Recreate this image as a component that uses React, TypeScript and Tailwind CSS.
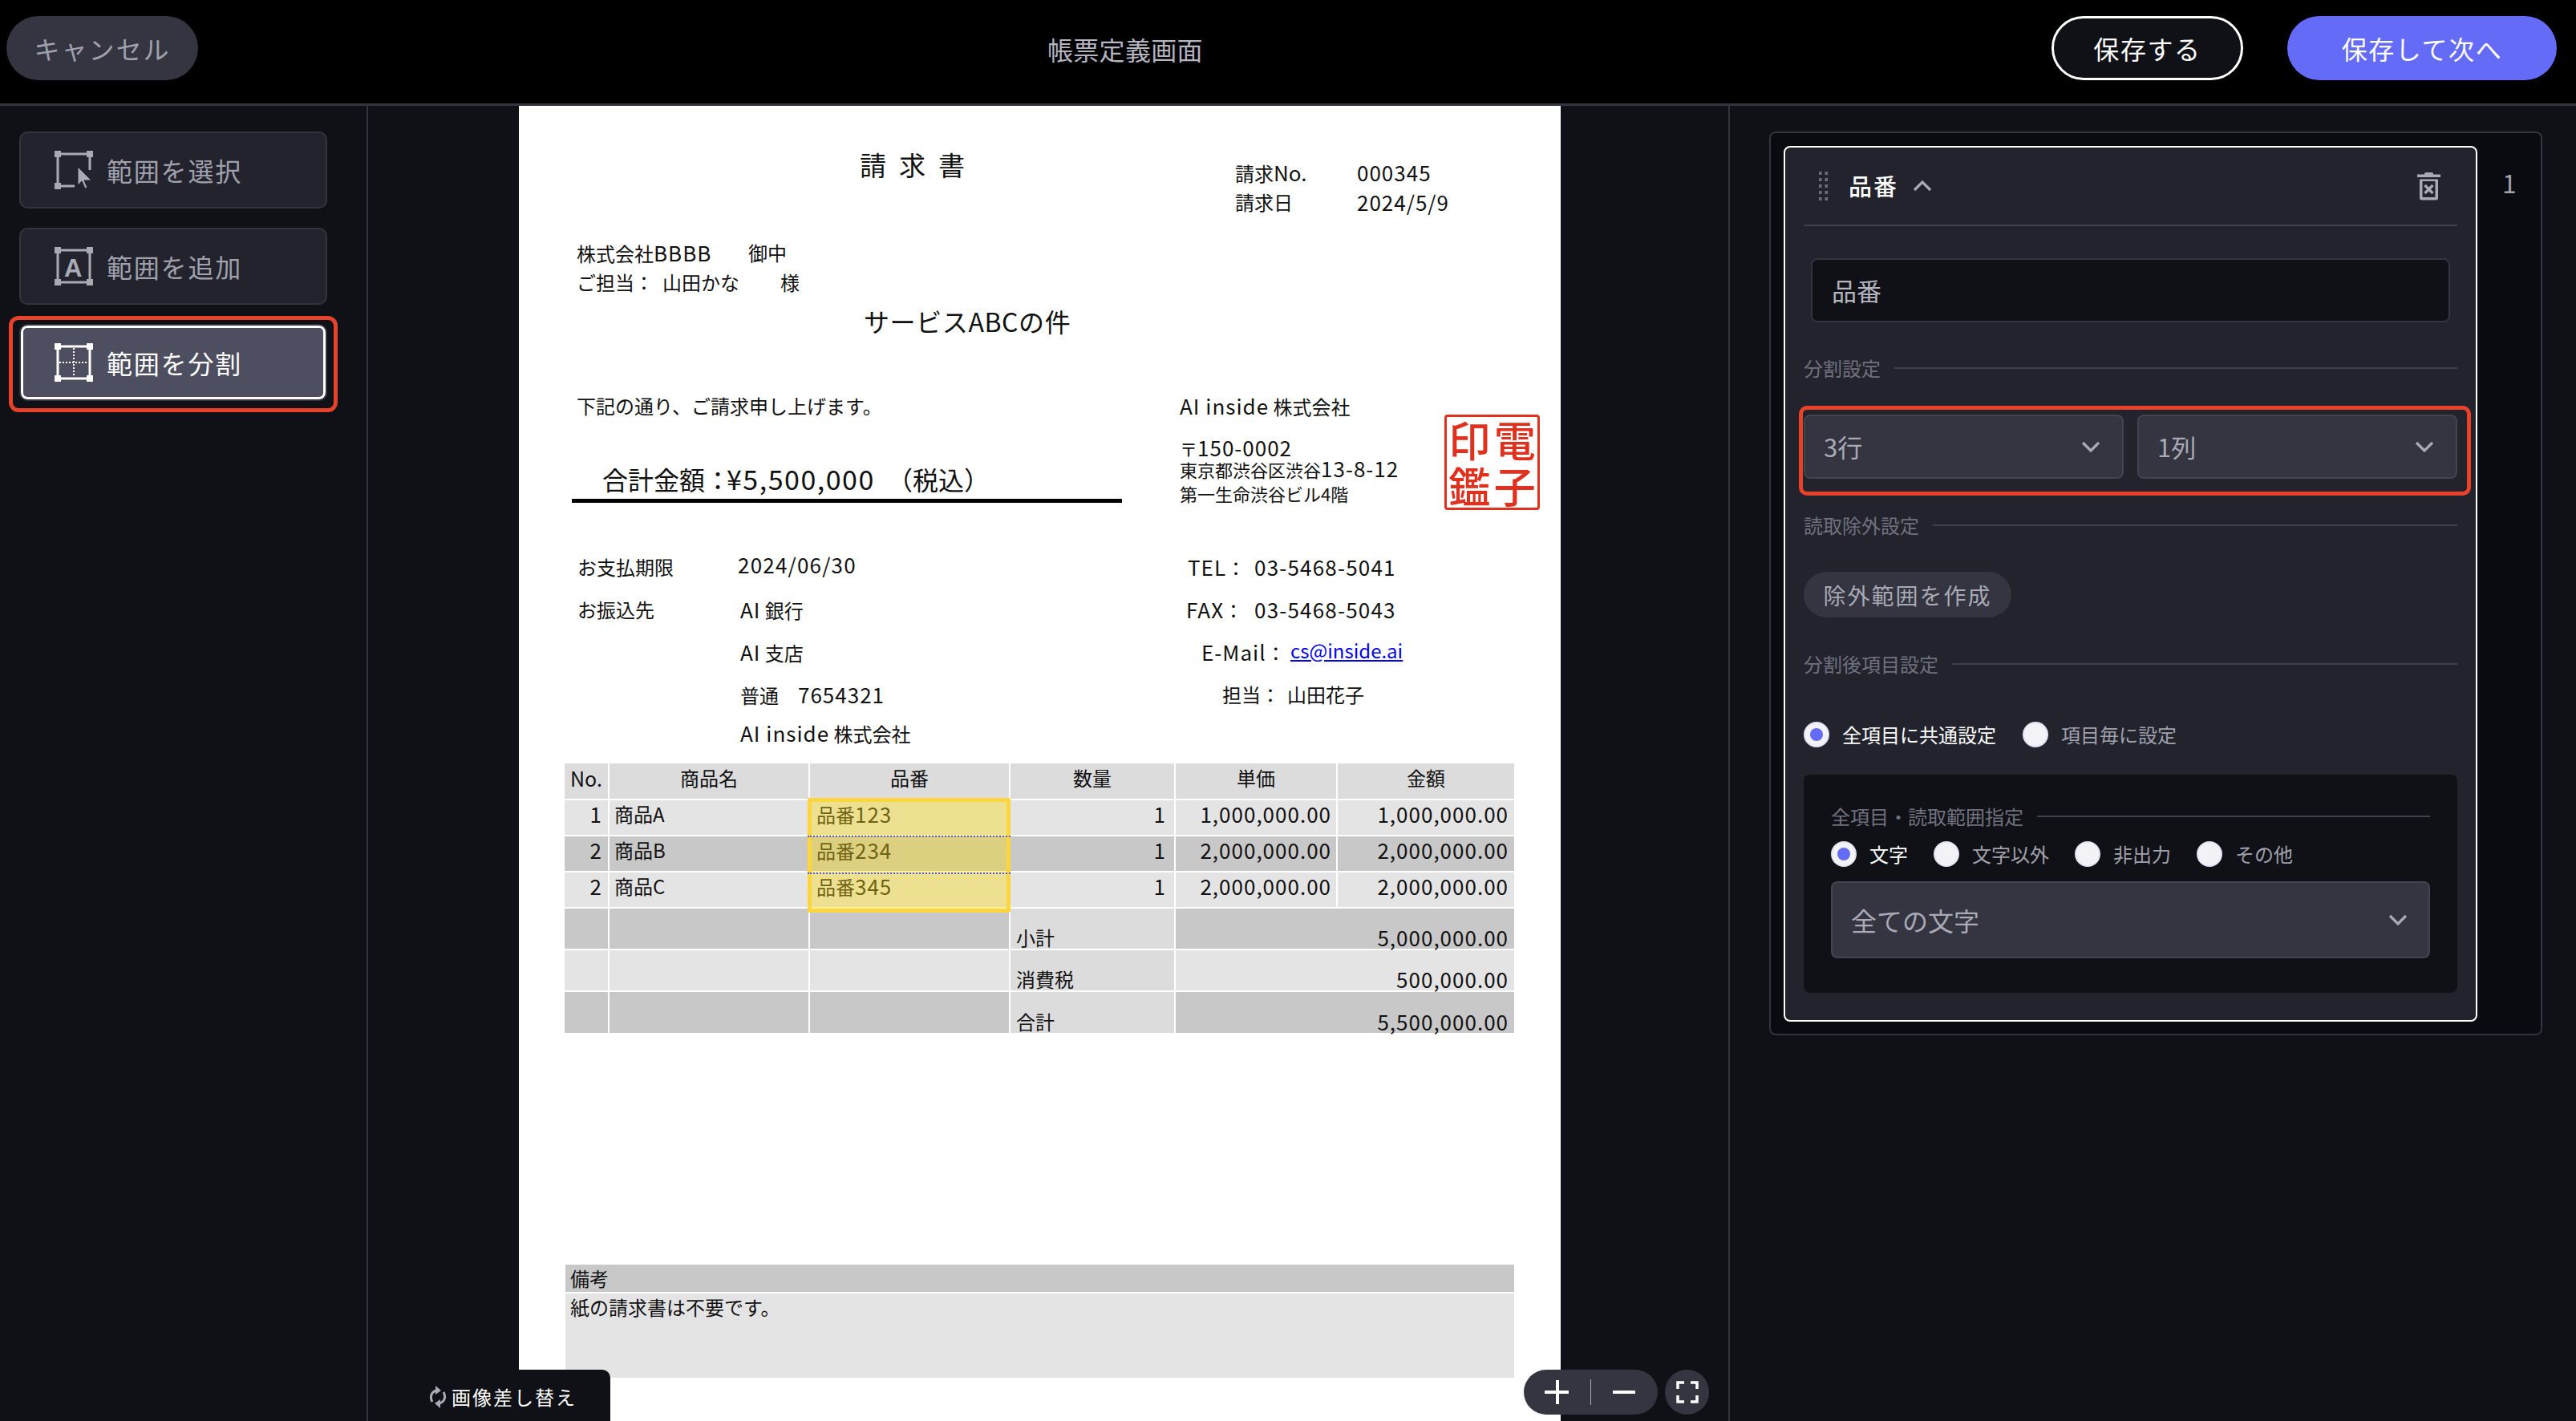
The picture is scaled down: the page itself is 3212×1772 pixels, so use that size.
import type { ReactNode } from "react"

const rows = [
  { no: "1", name: "商品A", code: "123", qty: "1", price: "1,000,000.00", total: "1,000,000.00", bg: "bg-[#e4e4e4]" },
  { no: "2", name: "商品B", code: "234", qty: "1", price: "2,000,000.00", total: "2,000,000.00", bg: "bg-[#c8c8c8]" },
  { no: "2", name: "商品C", code: "345", qty: "1", price: "2,000,000.00", total: "2,000,000.00", bg: "bg-[#e4e4e4]" },
]

const summary = [
  { label: "小計", value: "5,000,000.00", bg: "bg-[#c8c8c8]" },
  { label: "消費税", value: "500,000.00", bg: "bg-[#e4e4e4]" },
  { label: "合計", value: "5,500,000.00", bg: "bg-[#c8c8c8]" },
]

const Num = ({ children }: { children: ReactNode }) => (
  <span className="text-[26px] tracking-[1px]">{children}</span>
)

const WideNum = ({ children }: { children: ReactNode }) => (
  <span className="text-[26px] tracking-[1.2px]">{children}</span>
)

const Handles = ({ fill, skip }: { fill: string; skip?: boolean }) => (
  <g fill={fill}>
    <rect x="0" y="0" width="8" height="8" />
    <rect x="40" y="0" width="8" height="8" />
    <rect x="0" y="40" width="8" height="8" />
    {!skip && <rect x="40" y="40" width="8" height="8" />}
  </g>
)

const SelectIcon = () => (
  <svg viewBox="0 0 48 48" className="w-[48px] h-[48px] shrink-0">
    <Handles fill="#a9aab6" skip />
    <path d="M4 4H44M4 4V44M4 44H25M44 4V24" fill="none" stroke="#a9aab6" strokeWidth="3" />
    <path d="M29 20L29 43L34 38L38 47L41 46L37 37L46 37Z" fill="#a9aab6" stroke="#22232d" strokeWidth="1" />
  </svg>
)

const AddIcon = () => (
  <svg viewBox="0 0 48 48" className="w-[48px] h-[48px] shrink-0">
    <Handles fill="#a9aab6" />
    <rect x="4" y="4" width="40" height="40" fill="none" stroke="#a9aab6" strokeWidth="3" />
    <text x="24" y="37" textAnchor="middle" fontSize="31" fontWeight="700" fill="#a9aab6" fontFamily="Liberation Sans">
      A
    </text>
  </svg>
)

const SplitIcon = () => (
  <svg viewBox="0 0 48 48" className="w-[48px] h-[48px] shrink-0">
    <Handles fill="#ffffff" />
    <rect x="4" y="4" width="40" height="40" fill="none" stroke="#ffffff" strokeWidth="3" />
    <path d="M24 6V42M6 24H42" fill="none" stroke="#ffffff" strokeWidth="2" strokeDasharray="2 2" />
  </svg>
)

const Chevron = ({ up, className }: { up?: boolean; className: string }) => (
  <svg viewBox="0 0 24 14" className={className}>
    <path d={up ? "M2 12L12 2L22 12" : "M2 2L12 12L22 2"} fill="none" stroke="#a9aab6" strokeWidth="3.2" />
  </svg>
)

const TrashIcon = () => (
  <svg viewBox="0 0 29 36" className="w-[29px] h-[36px] shrink-0">
    <path d="M9 3.5C9 1.5 10 1 11 1H18C19 1 20 1.5 20 3.5H29V7H0V3.5Z" fill="#a9aab6" />
    <path d="M3 9.5H26V33C26 34.5 25 35.5 23.5 35.5H5.5C4 35.5 3 34.5 3 33Z" fill="#a9aab6" />
    <rect x="6.5" y="12" width="16" height="20" fill="#22232d" />
    <path d="M9.5 17L19.5 27M19.5 17L9.5 27" stroke="#a9aab6" strokeWidth="3.4" />
  </svg>
)

const DragDots = () => (
  <svg viewBox="0 0 11 36" className="w-[11px] h-[36px] shrink-0">
    <path
      d="M0 0h3.5v4H0zM7.5 0H11v4H7.5zM0 8h3.5v4H0zM7.5 8H11v4H7.5zM0 16h3.5v4H0zM7.5 16H11v4H7.5zM0 24h3.5v4H0zM7.5 24H11v4H7.5zM0 32h3.5v4H0zM7.5 32H11v4H7.5z"
      fill="#6d6e7c"
    />
  </svg>
)

const SideButton = ({ icon, label, active }: { icon: ReactNode; label: string; active?: boolean }) => (
  <button
    className={`flex items-center gap-[17px] w-[384px] h-[96px] pl-[42px] rounded-[10px] border-2 border-[#33343f] text-[32px] tracking-[1.8px] ${
      active ? "bg-[#4d4e60] text-white shadow-[inset_0_0_0_3px_#ffffff]" : "bg-[#22232d] text-[#a0a1ad]"
    }`}
  >
    {icon}
    <span>{label}</span>
  </button>
)

const SectionLabel = ({ children, className }: { children: string; className: string }) => (
  <div className={`flex items-center gap-[17px] h-[36px] ${className}`}>
    <span className="text-[24px] text-[#70717e] whitespace-nowrap">{children}</span>
    <div className="flex-1 h-[2px] bg-[#3f404c]" />
  </div>
)

const Radio = ({ label, checked }: { label: string; checked?: boolean }) => (
  <div className="flex items-center gap-[16px] h-[32px]">
    <span className="flex items-center justify-center w-[32px] h-[32px] rounded-full bg-[#f3f3f7] border-2 border-[#e2e2f6]">
      {checked && <span className="w-[16px] h-[16px] rounded-full bg-[#646cf7]" />}
    </span>
    <span className={`text-[24px] leading-[32px] ${checked ? "text-white" : "text-[#a0a1ad]"}`}>{label}</span>
  </div>
)

const SelectBox = ({ label, className, text }: { label: string; className: string; text: string }) => (
  <div className={`flex items-center justify-between rounded-[8px] border-2 border-[#43444f] bg-[#343541] ${className}`}>
    <span className={`${text} text-[#a9aab6]`}>{label}</span>
    <Chevron className="w-[24px] h-[14px]" />
  </div>
)

const Stamp = () => (
  <div className="grid grid-cols-2 grid-rows-2 w-[119px] h-[119px] mt-[29px] rounded-[4px] border-[3px] border-[#e0301e] text-[#e0301e] text-[52px] leading-[56px] font-medium">
    <span className="flex items-center justify-center">印</span>
    <span className="flex items-center justify-center">電</span>
    <span className="flex items-center justify-center">鑑</span>
    <span className="flex items-center justify-center">子</span>
  </div>
)

const ContactRow = ({
  height,
  label,
  mid,
  right,
}: {
  height: string
  label?: string
  mid: ReactNode
  right?: ReactNode
}) => (
  <div className={`flex items-center pl-[73px] ${height}`}>
    <span className="w-[200px] text-[24px]">{label}</span>
    <span className="w-[559px] text-[24px]">{mid}</span>
    {right}
  </div>
)

const InvoiceTable = () => (
  <div className="relative ml-[57px] mt-[18px] w-[1184px] grid grid-cols-[54px_248px_248px_204px_200px_220px] grid-rows-[44px_43px_43px_43px_50px_50px_51px] gap-[2px] text-[24px] text-[#111111]">
    {["No.", "商品名", "品番", "数量", "単価", "金額"].map((h) => (
      <div key={h} className="flex justify-center pt-[1px] bg-[#dcdcdc] leading-[34px]">
        {h === "No." ? <span className="text-[25px]">{h}</span> : h}
      </div>
    ))}
    {rows.map((r) => (
      <div key={r.name} className="contents">
        <div className={`${r.bg} flex justify-end pr-[7px] leading-[33px]`}>
          <Num>{r.no}</Num>
        </div>
        <div className={`${r.bg} pl-[6px] leading-[33px]`}>{r.name}</div>
        <div className={`${r.bg} pl-[8px] leading-[33px]`}>
          品番<Num>{r.code}</Num>
        </div>
        <div className={`${r.bg} text-right pr-[10px] leading-[33px]`}>
          <Num>{r.qty}</Num>
        </div>
        <div className={`${r.bg} text-right pr-[6px] leading-[33px]`}>
          <Num>{r.price}</Num>
        </div>
        <div className={`${r.bg} text-right pr-[7px] leading-[33px]`}>
          <Num>{r.total}</Num>
        </div>
      </div>
    ))}
    {summary.map((s) => (
      <div key={s.label} className="contents">
        <div className={s.bg} />
        <div className={s.bg} />
        <div className={s.bg} />
        <div className="bg-[#dcdcdc] flex items-end pl-[7px] leading-[28px]">{s.label}</div>
        <div className={`${s.bg} col-span-2 flex items-end justify-end pr-[7px] leading-[28px]`}>
          <Num>{s.value}</Num>
        </div>
      </div>
    ))}
    {/* selection overlay */}
    <div className="absolute left-[303px] top-[43px] w-[253px] h-[143px] rounded-[2px] border-[5px] border-[#fdd53e] bg-[#fbd914]/40">
      <div className="absolute -left-[5px] -right-[5px] top-[42px] border-t-2 border-dotted border-[#4f5bd5]" />
      <div className="absolute -left-[5px] -right-[5px] top-[88px] border-t-2 border-dotted border-[#4f5bd5]" />
    </div>
  </div>
)

const InvoiceDocument = () => (
  <div className="w-[1299px] h-full overflow-hidden bg-white text-[#111111] pt-[65px]">
    <div className="flex">
      <div className="w-[893px] pl-[425px] -mt-[10px] text-[33px] leading-[36px] tracking-[16px] whitespace-nowrap">請求書</div>
      <div className="flex flex-col text-[24px] leading-[36px]">
        <div className="flex">
          <span className="w-[152px]">
            請求<span className="text-[26px]">No.</span>
          </span>
          <Num>000345</Num>
        </div>
        <div className="flex">
          <span className="w-[152px]">請求日</span>
          <Num>2024/5/9</Num>
        </div>
      </div>
    </div>

    <div className="flex pl-[72px] mt-[27px] text-[24px] leading-[36px]">
      <span className="w-[214px]">
        株式会社<Num>BBBB</Num>
      </span>
      <span>御中</span>
    </div>
    <div className="flex pl-[72px] text-[24px] leading-[36px]">
      <span className="w-[107px]">ご担当：</span>
      <span className="w-[147px]">山田かな</span>
      <span>様</span>
    </div>
    <div className="pl-[430px] mt-[8px] text-[32px] tracking-[0.6px] leading-[44px]">サービスABCの件</div>

    <div className="flex mt-[66px]">
      <div className="w-[824px] pl-[66px]">
        <div className="w-[686px]">
          <div className="pl-[6px] text-[24px] leading-[36px]">下記の通り、ご請求申し上げます。</div>
          <div className="flex pl-[38px] mt-[51px] text-[32px] leading-[44px] whitespace-pre">
            <span className="w-[155px]">合計金額：</span>
            <span className="text-[34px] tracking-[1.5px]">¥5,500,000</span>
            <span className="ml-[15px]">（税込）</span>
          </div>
          <div className="mt-[3px] h-[5px] bg-black" />
        </div>
      </div>
      <div className="w-[330px]">
        <div className="text-[24px] leading-[36px]">
          <Num>AI inside</Num> 株式会社
        </div>
        <div className="mt-[21px] text-[22px] leading-[24px]">
          〒<Num>150-0002</Num>
        </div>
        <div className="text-[22px] leading-[26px]">
          東京都渋谷区渋谷<Num>13-8-12</Num>
        </div>
        <div className="text-[22px] leading-[34px]">第一生命渋谷ビル4階</div>
      </div>
      <Stamp />
    </div>

    <div className="mt-[44px]">
      <ContactRow
        height="h-[53px]"
        label="お支払期限"
        mid={<span className="block -translate-y-[3px]"><WideNum>2024/06/30</WideNum></span>}
        right={
          <span className="flex pl-[2px] text-[24px]">
            <span className="w-[83px]"><Num>TEL</Num>：</span>
            <WideNum>03-5468-5041</WideNum>
          </span>
        }
      />
      <ContactRow
        height="h-[53px]"
        label="お振込先"
        mid={<span className="pl-[3px]"><Num>AI</Num> 銀行</span>}
        right={
          <span className="flex text-[24px]">
            <span className="w-[85px]"><Num>FAX</Num>：</span>
            <WideNum>03-5468-5043</WideNum>
          </span>
        }
      />
      <ContactRow
        height="h-[53px]"
        mid={<span className="pl-[3px]"><Num>AI</Num> 支店</span>}
        right={
          <span className="flex pl-[19px] text-[24px]">
            <span className="w-[111px]"><Num>E-Mail</Num>：</span>
            <span className="text-[24px] text-[#0000ee] underline">cs@inside.ai</span>
          </span>
        }
      />
      <ContactRow
        height="h-[53px]"
        mid={<span className="pl-[3px]">普通　<Num>7654321</Num></span>}
        right={
          <span className="flex pl-[45px] text-[24px]">
            <span className="w-[81px]">担当：</span>
            <span>山田花子</span>
          </span>
        }
      />
      <ContactRow height="h-[42px]" mid={<span className="pl-[3px]"><Num>AI inside</Num> 株式会社</span>} />
    </div>

    <InvoiceTable />

    <div className="ml-[58px] mt-[289px] w-[1183px] text-[24px]">
      <div className="h-[34px] pl-[6px] leading-[34px] bg-[#c8c8c8]">備考</div>
      <div className="mt-[2px] h-[105px] pl-[6px] leading-[34px] bg-[#e4e4e4]">紙の請求書は不要です。</div>
    </div>
  </div>
)

const ZoomControls = () => (
  <div className="absolute left-[1441px] bottom-[8px] flex gap-[9px]">
    <div className="flex items-center w-[167px] h-[56px] rounded-full bg-[#343541]">
      <div className="relative w-[83px] h-full flex items-center justify-center pr-[1px]">
        <div className="w-[30px] h-[4px] bg-white" />
        <div className="absolute left-[40px] w-[4px] h-[30px] bg-white" />
      </div>
      <div className="w-[1px] h-[32px] bg-[#a9aab6]" />
      <div className="flex-1 flex items-center justify-center pr-[1px]">
        <div className="w-[28px] h-[4px] bg-white" />
      </div>
    </div>
    <div className="flex items-center justify-center w-[55px] h-[56px] rounded-full bg-[#343541]">
      <svg viewBox="0 0 28 28" className="w-[28px] h-[28px]">
        <path d="M2 10V2H10M18 2H26V10M26 18V26H18M10 26H2V18" fill="none" stroke="#ffffff" strokeWidth="3.5" />
      </svg>
    </div>
  </div>
)

const ReplaceImageTab = () => (
  <div className="absolute left-[31px] bottom-0 flex items-center gap-[6px] w-[271px] h-[64px] pl-[45px] pt-[4px] rounded-tr-[10px] bg-[#101116] text-[24px] tracking-[2px] text-white">
    <svg viewBox="0 0 22 30" className="w-[22px] h-[30px] shrink-0">
      <path d="M4 21C1 16 2 9 9 7" fill="none" stroke="#a9aab6" strokeWidth="3" />
      <path d="M8 1L15 7L8 12Z" fill="#a9aab6" />
      <path d="M18 9C21 14 20 21 13 23" fill="none" stroke="#a9aab6" strokeWidth="3" />
      <path d="M14 18L7 23L14 29Z" fill="#a9aab6" />
    </svg>
    <span>画像差し替え</span>
  </div>
)

export default function App() {
  return (
    <div className="w-[3212px] h-[1772px] overflow-hidden flex flex-col bg-[#101116] [font-family:'Noto_Sans_CJK_JP','Liberation_Sans',sans-serif]">
      <header className="flex items-start shrink-0 h-[132px] pt-[20px] pl-[8px] pr-[24px] bg-black border-b-[3px] border-[#33343f]">
        <button className="w-[239px] h-[80px] pb-[1px] rounded-full bg-[#343541] text-[32px] tracking-[2px] text-[#a0a1ad]">キャンセル</button>
        <div className="ml-[1059px] h-[80px] leading-[82px] text-[32px] tracking-[0.3px] text-[#b4b5c0]">帳票定義画面</div>
        <div className="ml-auto flex gap-[55px]">
          <button className="w-[239px] h-[80px] rounded-full bg-[#101116] border-[3px] border-white text-[32px] tracking-[1.6px] text-white">保存する</button>
          <button className="w-[336px] h-[80px] rounded-full bg-[#646cf7] text-[32px] tracking-[1.6px] text-white">保存して次へ</button>
        </div>
      </header>

      <div className="flex flex-1 min-h-0">
        <aside className="relative w-[459px] shrink-0 pl-[24px] pt-[32px] border-r-[2px] border-[#33343f] flex flex-col gap-[24px]">
          <SideButton icon={<SelectIcon />} label="範囲を選択" />
          <SideButton icon={<AddIcon />} label="範囲を追加" />
          <div className="relative">
            <SideButton icon={<SplitIcon />} label="範囲を分割" active />
            <div className="absolute -left-[13px] -top-[10px] -bottom-[14px] w-[410px] rounded-[12px] border-[5px] border-[#e8432a]" />
          </div>
        </aside>

        <main className="relative w-[1698px] shrink-0 h-full pl-[188px] border-r-[2px] border-[#33343f]">
          <InvoiceDocument />
          <ReplaceImageTab />
          <ZoomControls />
        </main>

        <section className="flex-1 pl-[49px] pt-[32px]">
          <div className="flex w-[964px] h-[1127px] p-[16px] pr-0 rounded-[8px] border-2 border-[#33343f] bg-[#0a0b10]">
            <div className="w-[865px] h-[1092px] px-[23px] rounded-[8px] border-[2px] border-white bg-[#22232d]">
              <div className="flex items-center h-[98px] pl-[19px] pr-[21px] border-b-2 border-[#3f404c]">
                <DragDots />
                <span className="ml-[26px] text-[29px] tracking-[2px] font-medium text-white">品番</span>
                <Chevron up className="ml-[18px] w-[24px] h-[14px]" />
                <div className="ml-auto">
                  <TrashIcon />
                </div>
              </div>

              <div className="flex items-center mx-[9px] mt-[40px] h-[80px] pl-[24px] rounded-[8px] border-2 border-[#33343f] bg-[#101116] text-[31px] text-[#b4b5c0]">
                品番
              </div>

              <SectionLabel className="mt-[39px]">分割設定</SectionLabel>
              <div className="relative grid grid-cols-2 gap-[17px] mt-[40px]">
                <SelectBox label="3行" className="h-[80px] pl-[23px] pr-[27px]" text="text-[31px]" />
                <SelectBox label="1列" className="h-[80px] pl-[23px] pr-[27px]" text="text-[31px]" />
                <div className="absolute -left-[6px] -right-[17px] -top-[11px] -bottom-[21px] rounded-[10px] border-[5px] border-[#e8432a]" />
              </div>

              <SectionLabel className="mt-[40px]">読取除外設定</SectionLabel>
              <button className="block mt-[40px] w-[259px] h-[57px] rounded-full bg-[#343541] text-[28px] tracking-[2px] text-[#a9aab6]">除外範囲を作成</button>

              <SectionLabel className="mt-[40px]">分割後項目設定</SectionLabel>
              <div className="flex gap-[33px] mt-[54px]">
                <Radio label="全項目に共通設定" checked />
                <Radio label="項目毎に設定" />
              </div>

              <div className="mt-[34px] h-[272px] px-[34px] pt-[34px] rounded-[8px] bg-[#101116]">
                <SectionLabel className="">全項目・読取範囲指定</SectionLabel>
                <div className="flex gap-[32px] mt-[13px]">
                  <Radio label="文字" checked />
                  <Radio label="文字以外" />
                  <Radio label="非出力" />
                  <Radio label="その他" />
                </div>
                <SelectBox label="全ての文字" className="mt-[18px] h-[96px] pl-[23px] pr-[26px]" text="text-[32px]" />
              </div>
            </div>
            <div className="flex-1 pt-[23px] pl-[31px] text-[32px] leading-[44px] text-[#a0a1ad]">1</div>
          </div>
        </section>
      </div>
    </div>
  )
}
